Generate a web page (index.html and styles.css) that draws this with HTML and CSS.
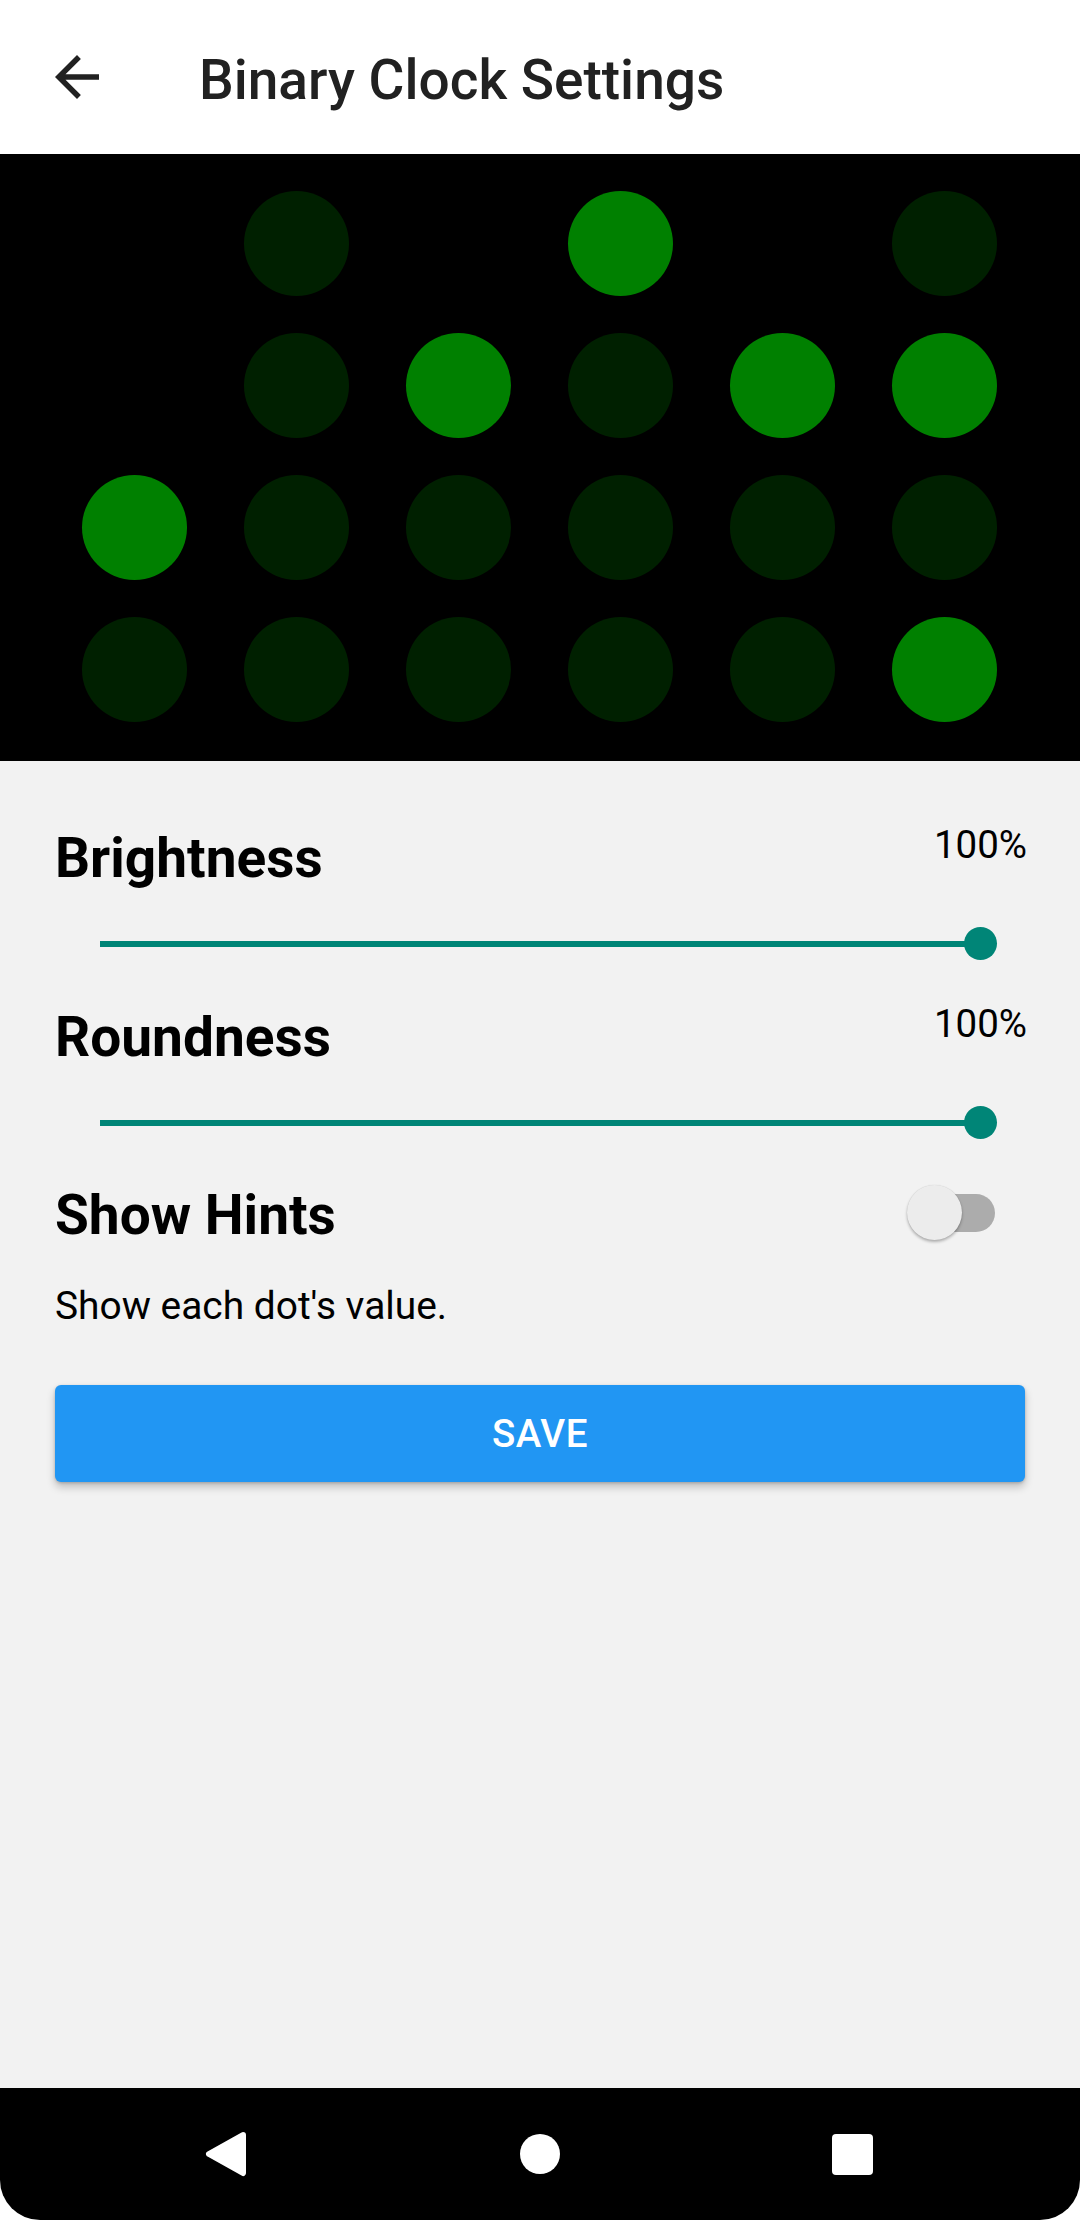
FILE: index.html
```html
<!DOCTYPE html>
<html lang="en">
<head>
<meta charset="utf-8">
<title>Binary Clock Settings</title>
<link rel="stylesheet" href="styles.css">
</head>
<body>
<div class="app">
  <header class="toolbar">
    <svg class="back-icon" viewBox="0 0 24 24" width="66" height="66"><path d="M20 11H7.830l5.590-5.590L12 4l-8 8 8 8 1.410-1.410L7.830 13H20v-2z" fill="#212121"/></svg>
    <h1 class="title">Binary Clock Settings</h1>
  </header>

  <section class="clock">
    <span class="cell"></span><span class="dot dim"></span><span class="cell"></span><span class="dot lit"></span><span class="cell"></span><span class="dot dim"></span>
    <span class="cell"></span><span class="dot dim"></span><span class="dot lit"></span><span class="dot dim"></span><span class="dot lit"></span><span class="dot lit"></span>
    <span class="dot lit"></span><span class="dot dim"></span><span class="dot dim"></span><span class="dot dim"></span><span class="dot dim"></span><span class="dot dim"></span>
    <span class="dot dim"></span><span class="dot dim"></span><span class="dot dim"></span><span class="dot dim"></span><span class="dot dim"></span><span class="dot lit"></span>
  </section>

  <main class="settings">
    <div class="setting-head">
      <span class="label">Brightness</span>
      <span class="value">100%</span>
    </div>
    <div class="slider"><div class="track"></div><div class="thumb"></div></div>

    <div class="setting-head second">
      <span class="label">Roundness</span>
      <span class="value">100%</span>
    </div>
    <div class="slider"><div class="track"></div><div class="thumb"></div></div>

    <div class="switch-row">
      <span class="label">Show Hints</span>
      <div class="switch"><div class="switch-track"></div><div class="switch-thumb"></div></div>
    </div>
    <p class="desc">Show each dot's value.</p>

    <button class="save">SAVE</button>
  </main>

  <nav class="navbar">
    <div class="nav-btn">
      <svg width="50" height="56" viewBox="0 0 50 56"><path d="M43 9 L9 28 L43 47 Z" fill="#fff" stroke="#fff" stroke-width="6" stroke-linejoin="round"/></svg>
    </div>
    <div class="nav-btn"><span class="home"></span></div>
    <div class="nav-btn"><span class="recents"></span></div>
  </nav>
</div>
</body>
</html>
```

FILE: styles.css
```css
html, body {
  margin: 0;
  padding: 0;
  background: #ffffff;
}
body {
  font-family: Roboto, "Noto Sans", "Liberation Sans", sans-serif;
}
.app {
  width: 1080px;
  height: 2220px;
  display: flex;
  flex-direction: column;
  overflow: hidden;
}
.toolbar {
  height: 154px;
  flex: none;
  background: #ffffff;
  display: flex;
  align-items: center;
}
.back-icon {
  margin-left: 44px;
  display: block;
}
.title {
  margin: 6px 0 0 89px;
  font-size: 55px;
  font-weight: 500;
  line-height: 64px;
  color: #212121;
}
.clock {
  flex: none;
  height: 607px;
  box-sizing: border-box;
  background: #000;
  padding: 37px 0 0 82px;
  display: grid;
  grid-template-columns: repeat(6, 105px);
  grid-auto-rows: 105px;
  column-gap: 57px;
  row-gap: 37px;
}
.dot {
  width: 105px;
  height: 105px;
  border-radius: 50%;
}
.dot.lit { background: #008000; }
.dot.dim { background: #002000; }

.settings {
  flex: 1;
  background: #f2f2f2;
  padding: 61px 55px 0 55px;
  display: flex;
  flex-direction: column;
}
.setting-head {
  display: flex;
  justify-content: space-between;
  align-items: flex-start;
}
.setting-head.second {
  margin-top: 35px;
}
.label {
  font-size: 55px;
  font-weight: 700;
  line-height: 64px;
  color: #000;
  margin-top: 4px;
}
.value {
  font-size: 38.5px;
  line-height: 45px;
  color: #000;
  margin-right: -2px;
}
.slider {
  position: relative;
  margin: 32px 44px 0 45px;
  height: 44px;
  display: flex;
  align-items: center;
}
.track {
  flex: 1;
  height: 6px;
  background: #008577;
}
.thumb {
  position: absolute;
  right: -16px;
  top: 5px;
  width: 33px;
  height: 33px;
  border-radius: 50%;
  background: #008577;
}
.switch-row {
  margin-top: 38px;
  height: 64px;
  display: flex;
  justify-content: space-between;
  align-items: center;
}
.switch-row .label {
  margin-top: 0;
}
.switch {
  position: relative;
  width: 88px;
  height: 56px;
  margin-right: 30px;
  margin-top: -4px;
}
.switch-track {
  position: absolute;
  right: 0;
  top: 9px;
  width: 76px;
  height: 38px;
  border-radius: 19px;
  background: #acacac;
}
.switch-thumb {
  position: absolute;
  left: 0;
  top: 0;
  width: 55px;
  height: 55px;
  border-radius: 50%;
  background: #ececec;
  box-shadow: 0 2px 3px rgba(0,0,0,0.28), 0 0 1px rgba(0,0,0,0.15);
}
.desc {
  margin: 36px 0 0 0;
  font-size: 38.9px;
  line-height: 45px;
  color: #000;
}
.save {
  margin-top: 57px;
  height: 97px;
  border: none;
  border-radius: 6px;
  background: #2196f3;
  color: #fff;
  font-family: Roboto, "Noto Sans", "Liberation Sans", sans-serif;
  font-size: 38.5px;
  font-weight: 500;
  letter-spacing: 0.5px;
  box-shadow: 0 5px 8px rgba(0,0,0,0.22), 0 1px 3px rgba(0,0,0,0.18);
  padding: 0;
}

.navbar {
  flex: none;
  height: 132px;
  background: #000;
  border-radius: 0 0 40px 40px;
  display: flex;
  justify-content: center;
  align-items: center;
  gap: 212px;
}
.nav-btn {
  width: 100px;
  height: 100px;
  display: flex;
  align-items: center;
  justify-content: center;
}
.nav-btn svg {
  display: block;
  margin-left: -6px;
}
.home {
  width: 40px;
  height: 40px;
  border-radius: 50%;
  background: #fff;
}
.recents {
  width: 41px;
  height: 41px;
  border-radius: 4px;
  background: #fff;
}
```
